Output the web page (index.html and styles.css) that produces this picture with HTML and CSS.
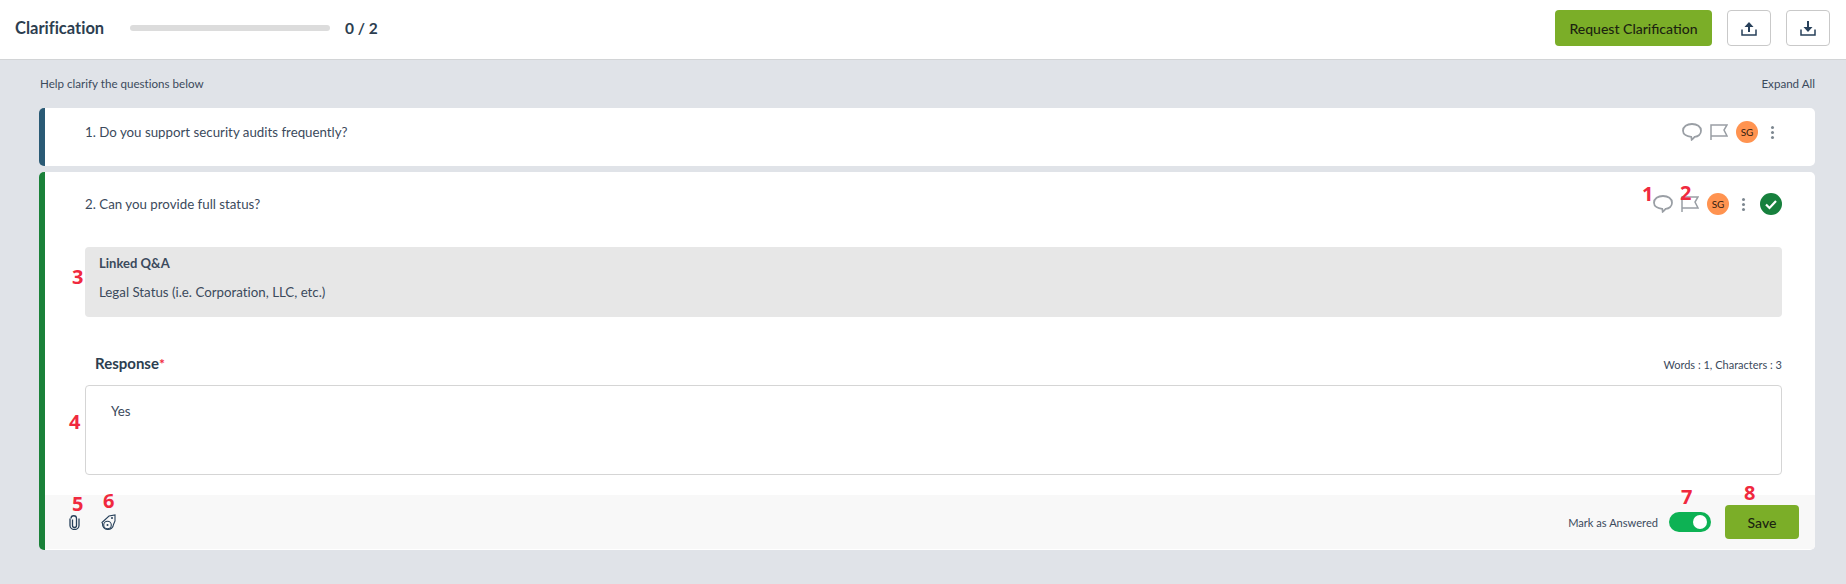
FILE: index.html
```html
<!DOCTYPE html>
<html lang="en">
<head>
    <meta charset="UTF-8">
    <title>Clarification</title>
    <link rel="stylesheet" href="styles.css">
</head>
<body>
    <header class="topbar">
        <h1>Clarification</h1>
        <div class="progress"></div>
        <span class="count">0 / 2</span>
        <button class="btn btn-request">Request Clarification</button>
        <button class="btn-icon">
            <svg width="16" height="15" viewBox="0 0 16 15"><path d="M8 3v8" fill="none" stroke="#27405a" stroke-width="2"/><path d="M3.500 6 8 1l4.500 5z" fill="#27405a"/><path d="M1 8.500v5.500h14V8.500" fill="none" stroke="#27405a" stroke-width="1.500"/></svg>
        </button>
        <button class="btn-icon">
            <svg width="16" height="15" viewBox="0 0 16 15"><path d="M8 0v7" fill="none" stroke="#27405a" stroke-width="2"/><path d="M3.500 6 8 11l4.500-5z" fill="#27405a"/><path d="M1 8.500v5.500h14V8.500" fill="none" stroke="#27405a" stroke-width="1.500"/></svg>
        </button>
    </header>

    <main class="content">
        <div class="subhead">
            <span>Help clarify the questions below</span>
            <span>Expand All</span>
        </div>

        <section class="card card-blue">
            <div class="question q-first">
                <span>1. Do you support security audits frequently?</span>
                <div class="tools">
                    <svg width="20" height="18" viewBox="0 0 20 18"><path d="M10 1c5 0 9 2.500 9 6.800 0 3.500-2.800 5.700-6.300 6-.8 1.100-1.800 2.100-3 2.900-.1-.9-.2-1.900-.5-2.900C5 13.500 1 11.500 1 7.800 1 3.500 5 1 10 1z" fill="none" stroke="#9a9fa5" stroke-width="1.800"/></svg>
                    <svg width="18" height="16" viewBox="0 0 18 16"><path d="M1 16V1h16l-3 5 3 6H1" fill="none" stroke="#9a9fa5" stroke-width="1.500"/></svg>
                    <span class="avatar">SG</span>
                    <span class="dots"><i></i><i></i><i></i></span>
                </div>
            </div>
        </section>

        <section class="card card-green">
            <div class="question q-second">
                <span>2. Can you provide full status?</span>
                <div class="tools">
                    <svg width="20" height="18" viewBox="0 0 20 18"><path d="M10 1c5 0 9 2.500 9 6.800 0 3.500-2.800 5.700-6.300 6-.8 1.100-1.800 2.100-3 2.900-.1-.9-.2-1.900-.5-2.900C5 13.500 1 11.500 1 7.800 1 3.500 5 1 10 1z" fill="none" stroke="#9a9fa5" stroke-width="1.800"/></svg>
                    <svg width="18" height="16" viewBox="0 0 18 16"><path d="M1 16V1h16l-3 5 3 6H1" fill="none" stroke="#9a9fa5" stroke-width="1.500"/></svg>
                    <span class="avatar">SG</span>
                    <span class="dots"><i></i><i></i><i></i></span>
                    <svg class="check" width="22" height="22" viewBox="0 0 22 22"><circle cx="11" cy="11" r="11" fill="#17803d"/><path d="M6 11.500 9.500 15 16 8" fill="none" stroke="#fff" stroke-width="2.200"/></svg>
                </div>
            </div>

            <div class="linked">
                <h3>Linked Q&amp;A</h3>
                <p>Legal Status (i.e. Corporation, LLC, etc.)</p>
            </div>

            <div class="response-head">
                <label>Response<em>*</em></label>
                <span>Words : 1, Characters : 3</span>
            </div>
            <div class="response-box">Yes</div>

            <footer class="card-foot">
                <svg class="clip" width="11" height="15" viewBox="0 0 11 15"><path d="M3.500 4.500v6a2 2 0 0 0 4 0V3.500a2.700 2.700 0 0 0-5.500 0" fill="none" stroke="#27405a" stroke-width="1.300"/><path d="M1 3.500v7a4.500 4 0 0 0 9 0V3.500" fill="none" stroke="#27405a" stroke-width="1.300"/></svg>
                <svg class="tag" width="15" height="17" viewBox="0 0 15 17"><path d="M1 8.500 8 2l6-1v6l-1.500 3.500a5.500 5.500 0 0 1-11-1z" fill="none" stroke="#27405a" stroke-width="1.100"/><circle cx="6.500" cy="11" r="3.800" fill="#f8f8f8" stroke="#27405a" stroke-width="1.100"/><circle cx="6.500" cy="11" r="1" fill="#27405a"/><circle cx="11" cy="4" r="1" fill="#27405a"/></svg>
                <span class="mark">Mark as Answered</span>
                <span class="toggle"><i></i></span>
                <button class="btn btn-save">Save</button>
            </footer>
        </section>
    </main>

    <!-- red numbers drawn over the screenshot -->
    <span class="note n1">1</span>
    <span class="note n2">2</span>
    <span class="note n3">3</span>
    <span class="note n4">4</span>
    <span class="note n5">5</span>
    <span class="note n6">6</span>
    <span class="note n7">7</span>
    <span class="note n8">8</span>
</body>
</html>
```

FILE: styles.css
```css
html, body {
    height: 100%;
}

body {
    font-family: "Lato", "Noto Sans", sans-serif;
    font-variant-ligatures: none;
    margin: 0;
    background: #e0e3e8;
    color: #3b4a5c;
    font-size: 13.3px;
    overflow: hidden;
    position: relative;
}

.topbar {
    height: 60px;
    background: #fff;
    border-bottom: 1px solid #d2d4d6;
    display: flex;
    align-items: center;
    padding: 0 16px 3px 15px;
    box-sizing: border-box;
}

.topbar h1 {
    font-size: 16.5px;
    font-weight: 700;
    color: #2c3e50;
    margin: 0;
    width: 115px;
}

.progress {
    width: 200px;
    height: 6px;
    border-radius: 3px;
    background: #dcdcdc;
}

.count {
    margin-left: 15px;
    font-size: 15.5px;
    font-weight: 700;
    color: #2c3e50;
    margin-right: auto;
}

.btn {
    background: #7bae28;
    border: none;
    border-radius: 4px;
    color: #1c2410;
    font-family: inherit;
    font-size: 14px;
    font-weight: 500;
    height: 36px;
}

.btn-request {
    width: 157px;
}

.btn-icon {
    width: 44px;
    height: 36px;
    margin-left: 15px;
    background: #fff;
    border: 1px solid #c9c9c9;
    border-radius: 4px;
    padding: 0;
    display: flex;
    align-items: center;
    justify-content: center;
}

.content {
    padding: 0 31px 0 39px;
}

.subhead {
    display: flex;
    justify-content: space-between;
    height: 48px;
    align-items: center;
    font-size: 11.6px;
    padding: 0 0 2px 1px;
    box-sizing: border-box;
}

.card {
    background: #fff;
    border-radius: 5px;
    margin-bottom: 6px;
    box-sizing: border-box;
    overflow: hidden;
}

.card-blue {
    border-left: 6px solid #2a5a75;
    height: 58px;
}

.card-green {
    border-left: 6px solid #1a8139;
    height: 378px;
}

.question {
    display: flex;
    justify-content: space-between;
    align-items: center;
    padding-left: 40px;
}

.q-first {
    height: 48px;
    padding-right: 34px;
}

.q-second {
    height: 64px;
    padding-right: 33px;
}

.tools {
    display: flex;
    align-items: center;
    gap: 8px;
    color: #9a9fa5;
}

.avatar {
    width: 22px;
    height: 22px;
    border-radius: 50%;
    background: #ff9350;
    color: #33200f;
    font-size: 10px;
    display: flex;
    align-items: center;
    justify-content: center;
}

.dots {
    display: flex;
    flex-direction: column;
    gap: 2px;
    width: 4px;
    margin: 0 6px 0 5px;
}

.dots i {
    width: 3px;
    height: 3px;
    border-radius: 50%;
    background: #7d8790;
}

.linked {
    margin: 11px 33px 0 40px;
    height: 70px;
    background: #e7e7e7;
    border-radius: 4px;
    padding: 7px 14px;
    box-sizing: border-box;
}

.linked h3 {
    margin: 0;
    font-size: 13px;
    font-weight: 700;
    line-height: 19px;
}

.linked p {
    margin: 10px 0 0;
    line-height: 19px;
}

.response-head {
    display: flex;
    justify-content: space-between;
    align-items: center;
    margin: 34px 33px 0 50px;
    height: 24px;
    font-size: 11px;
}

.response-head label {
    font-size: 15px;
    font-weight: 700;
    color: #2c3e50;
}

.response-head em {
    color: #f0293e;
    font-style: normal;
    font-size: 14px;
}

.response-head span {
    padding-top: 3px;
}

.response-box {
    margin: 10px 33px 0 40px;
    height: 90px;
    border: 1px solid #d5d5d5;
    border-radius: 4px;
    box-sizing: border-box;
    padding: 16px 25px;
    line-height: 18px;
}

.card-foot {
    margin-top: 20px;
    height: 54px;
    background: #f8f8f8;
    display: flex;
    align-items: center;
    padding: 0 16px 0 24px;
}

.tag {
    margin-left: 21px;
}

.mark {
    margin-left: auto;
    font-size: 11.1px;
}

.toggle {
    width: 42px;
    height: 20px;
    margin: 0 14px 0 11px;
    border-radius: 10px;
    background: #0db254;
    position: relative;
}

.toggle i {
    position: absolute;
    top: 3px;
    right: 4px;
    width: 14px;
    height: 14px;
    border-radius: 50%;
    background: #fff;
}

.btn-save {
    width: 74px;
    height: 34px;
}

/* annotation numbers */
.note {
    position: absolute;
    color: #f0293e;
    font-family: "Noto Sans", sans-serif;
    font-weight: 700;
    font-size: 20px;
    line-height: 20px;
}

.n1 { left: 1642px; top: 184px; }
.n2 { left: 1680px; top: 183px; }
.n3 { left: 72px; top: 267px; }
.n4 { left: 69px; top: 412px; }
.n5 { left: 72px; top: 494px; }
.n6 { left: 103px; top: 491px; }
.n7 { left: 1681px; top: 487px; }
.n8 { left: 1744px; top: 483px; }
```
